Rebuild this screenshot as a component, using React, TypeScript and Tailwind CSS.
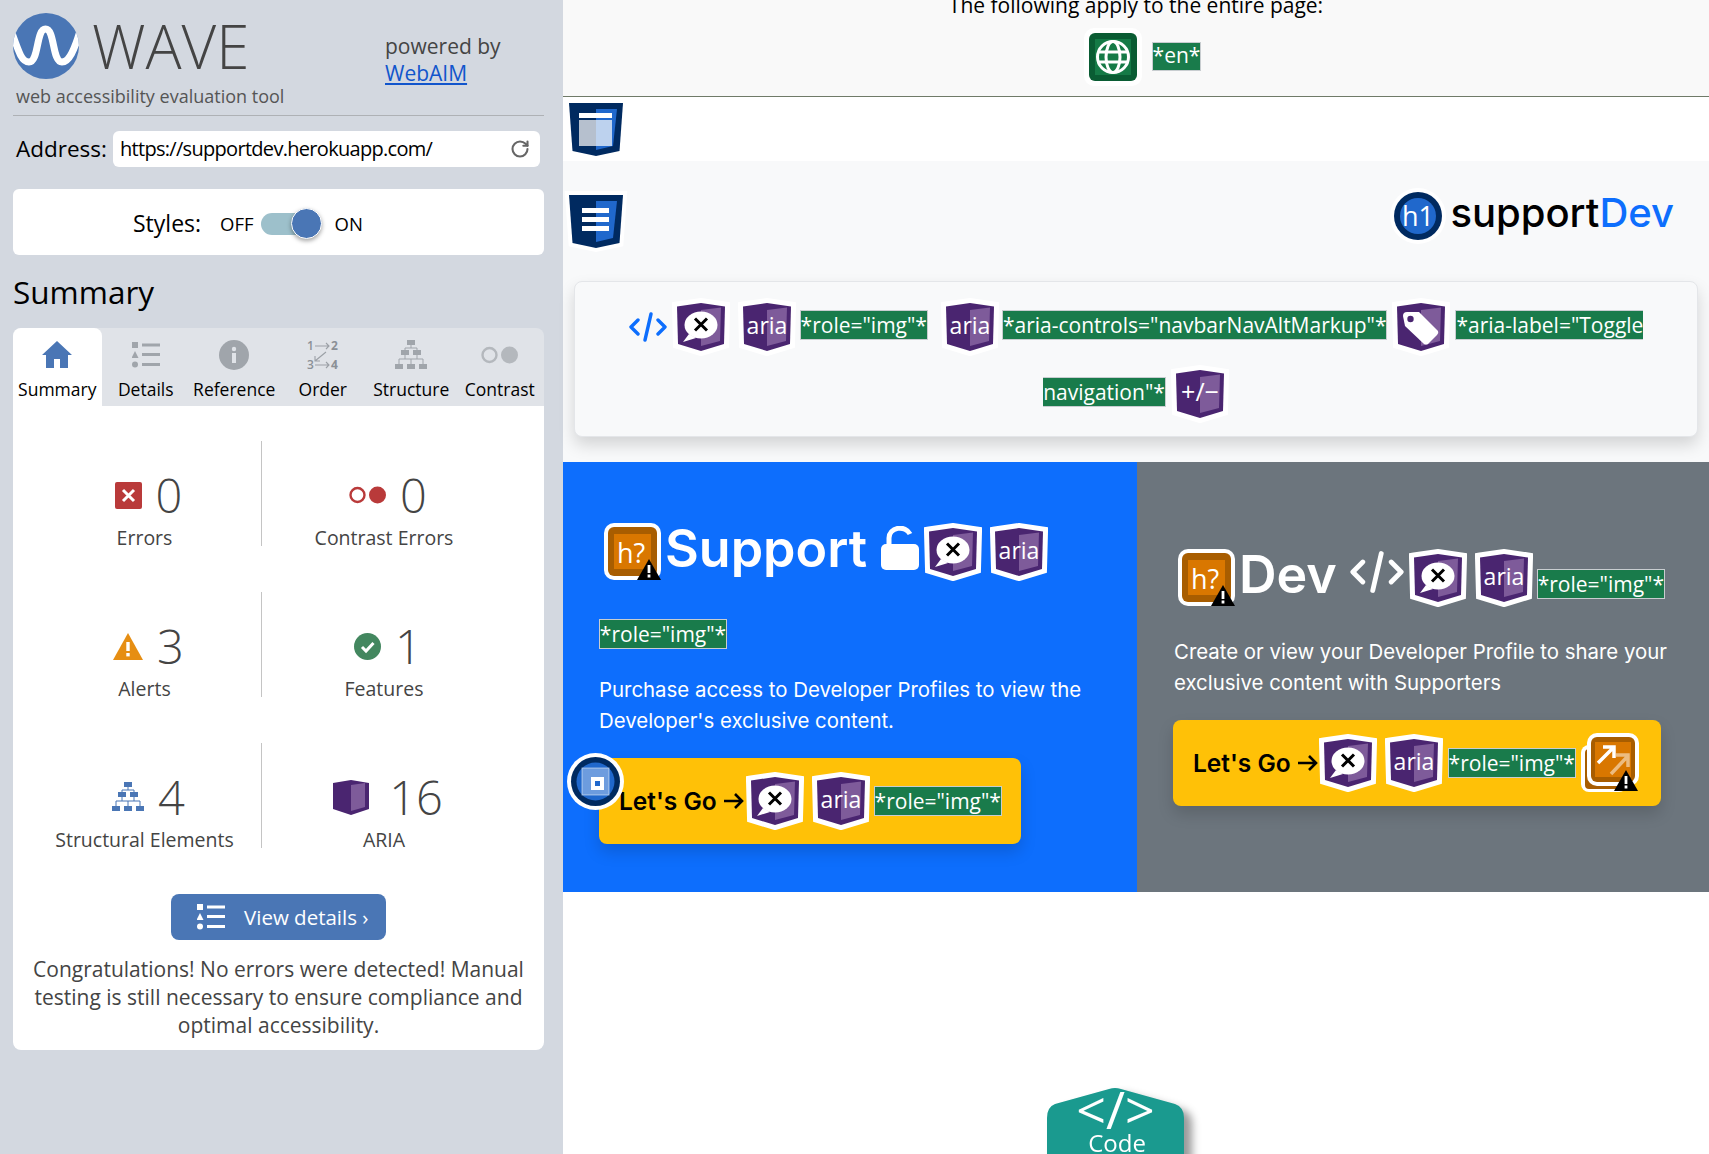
import { RotateCw } from 'lucide-react';
import type { ReactNode } from 'react';

/* WAVE sidebar + the annotated supportDev page */

const OPEN = "'Open Sans', sans-serif";

function Shield({ kind, className = '' }: { kind: 'x' | 'aria' | 'tag' | 'plus'; className?: string }) {
  return (
    <svg width="58" height="58" viewBox="0 0 58 58" className={`inline-block shrink-0 align-middle ${className}`}>
      <path d="M5 8.5 L29 5 L53 8.5 L52 46 L29 53 L6 46 Z" fill="#fff" stroke="#fff" strokeWidth="10" strokeLinejoin="miter" />
      <path d="M5 8.5 L29 5 L53 8.5 L52 46 L29 53 L6 46 Z" fill="#4a2570" />
      <path d="M29 12 L49 9.5 L48 43 L29 48 Z" fill="#7e5b9a" />
      {kind === 'x' && (
        <>
          <ellipse cx="29" cy="27" rx="16.5" ry="13.5" fill="#fff" />
          <path d="M17 36 L11 44 L24 40 Z" fill="#fff" />
          <path d="M23 20.5 L35 32.5 M35 20.5 L23 32.5" stroke="#000" strokeWidth="3" />
        </>
      )}
      {kind === 'aria' && (
        <text x="29" y="36" textAnchor="middle" fill="#fff" fontSize="23" fontFamily={OPEN}>
          aria
        </text>
      )}
      {kind === 'tag' && (
        <>
          <path d="M11 18 Q11 14 15 14 L27 14 L46 33 Q47 35 45 37 L36 46 Q34 47 32 46 L13 28 Z" fill="#fff" />
          <circle cx="18.5" cy="21" r="3.2" fill="#4a2570" />
        </>
      )}
      {kind === 'plus' && (
        <text x="29" y="36" textAnchor="middle" fill="#fff" fontSize="25" fontFamily={OPEN}>
          +/−
        </text>
      )}
    </svg>
  );
}

function BlueShield({ kind }: { kind: 'main' | 'nav' }) {
  return (
    <svg width="64" height="64" viewBox="0 0 64 64" className="block">
      <path d="M5 5 L59 5 L55.5 53 L32 58 L8.5 53 Z" fill="#fff" stroke="#fff" strokeWidth={kind === 'nav' ? 8 : 0} />
      <path d="M5 5 L59 5 L55.5 53 L32 58 L8.5 53 Z" fill="#002a60" />
      <path d="M32 11 L53 11 L49 48 L32 52 Z" fill="#2068cc" />
      {kind === 'main' ? (
        <>
          <rect x="15" y="15" width="33" height="5" fill="#fff" />
          <rect x="15" y="22" width="17" height="26" fill="#b6c0ce" />
          <rect x="32" y="22" width="16" height="26" fill="#bdd2ee" />
        </>
      ) : (
        <>
          <rect x="18" y="18" width="27" height="5" fill="#fff" />
          <rect x="18" y="27" width="27" height="5" fill="#fff" />
          <rect x="18" y="36" width="27" height="5" fill="#fff" />
        </>
      )}
    </svg>
  );
}

function WarnTriangle({ x, y }: { x: number; y: number }) {
  return (
    <g transform={`translate(${x} ${y})`}>
      <path d="M12 0 L24 21 L0 21 Z" fill="#000" />
      <rect x="10.6" y="6" width="2.8" height="8" fill="#fff" />
      <rect x="10.6" y="15.5" width="2.8" height="3" fill="#fff" />
    </g>
  );
}

function HeadingAlert({ className = '' }: { className?: string }) {
  return (
    <svg width="58" height="58" viewBox="0 0 58 58" className={`shrink-0 overflow-visible ${className}`}>
      <rect x="0" y="0" width="57" height="57" rx="10" fill="#fff" />
      <rect x="4" y="4" width="49" height="49" rx="6" fill="#a85d00" />
      <rect x="10" y="11" width="37" height="35" fill="#d97700" />
      <text x="27" y="40" textAnchor="middle" fill="#fff" fontSize="27" fontFamily={OPEN}>
        h?
      </text>
      <WarnTriangle x={33} y={36} />
    </svg>
  );
}

function ExternalAlert() {
  return (
    <svg width="60" height="60" viewBox="0 0 60 60" className="ml-[5px] shrink-0 overflow-visible">
      <rect x="0" y="12" width="46" height="47" rx="8" fill="#fff" />
      <rect x="4" y="16" width="40" height="40" rx="4" fill="#a85d00" />
      <rect x="6" y="0" width="52" height="53" rx="10" fill="#fff" />
      <rect x="10" y="4" width="44" height="45" rx="6" fill="#a85d00" />
      <rect x="14" y="9" width="36" height="35" fill="#d97700" />
      <path d="M17 30 L32 15 M22 14 L33 14 L33 25" stroke="#fff" strokeWidth="3.5" fill="none" />
      <path d="M30 41 L46 24 M35 22 L47 22 L47 34" stroke="#fff" strokeOpacity="0.5" strokeWidth="3.5" fill="none" />
      <WarnTriangle x={33} y={37} />
    </svg>
  );
}

function CodeGlyph({ className = '', width, height }: { className?: string; width: number; height: number }) {
  return (
    <svg width={width} height={height} viewBox="0 0 38 30" fill="none" stroke="currentColor" strokeWidth="3.4" strokeLinecap="round" strokeLinejoin="round" className={`inline-block shrink-0 align-middle ${className}`}>
      <path d="M9 8 L2 15 L9 22" />
      <path d="M29 8 L36 15 L29 22" />
      <path d="M22 2 L16 28" />
    </svg>
  );
}

function LockOpen() {
  return (
    <svg width="38" height="44" viewBox="0 0 38 44" className="-mt-[8px] ml-[14px] shrink-0">
      <path d="M8 21 V12 A11 10 0 0 1 29 8" fill="none" stroke="#fff" strokeWidth="5" />
      <rect x="0" y="18" width="38" height="26" rx="5" fill="#fff" />
    </svg>
  );
}

function RoleBox({ children, className = '' }: { children: ReactNode; className?: string }) {
  return (
    <span className={`border border-[#c8cdd0] bg-[#197b4b] text-white ${className}`} style={{ fontFamily: OPEN }}>
      {children}
    </span>
  );
}

function BlockRole({ className = '' }: { className?: string }) {
  return (
    <RoleBox className={`flex h-[30px] w-[128px] shrink-0 items-center justify-center text-[21px] leading-[28px] ${className}`}>
      *role="img"*
    </RoleBox>
  );
}

function Arrow() {
  return (
    <svg width="20" height="18" viewBox="0 0 20 18" fill="none" stroke="#000" strokeWidth="2.6" className="ml-[7px] shrink-0">
      <path d="M0 9 H18 M11 2 L18 9 L11 16" />
    </svg>
  );
}

function HomeIcon() {
  return (
    <svg width="30" height="27" viewBox="0 0 30 27">
      <path d="M15 0 L30 14 L26 14 L26 27 L18 27 L18 18 L12 18 L12 27 L4 27 L4 14 L0 14 Z" fill="#4a76b5" />
    </svg>
  );
}

function DetailsIcon({ color = '#a0a5ab' }: { color?: string }) {
  return (
    <svg width="28" height="26" viewBox="0 0 28 26" fill={color}>
      <rect x="0" y="0" width="6" height="6" />
      <path d="M3 9 L6.5 16 L-0.5 16 Z" />
      <circle cx="3" cy="22.5" r="3" />
      <rect x="10" y="1.5" width="18" height="3" />
      <rect x="10" y="11" width="18" height="3" />
      <rect x="10" y="21" width="18" height="3" />
    </svg>
  );
}

function InfoIcon() {
  return (
    <svg width="30" height="30" viewBox="0 0 30 30">
      <circle cx="15" cy="15" r="15" fill="#a0a5ab" />
      <rect x="13" y="13" width="4" height="10" fill="#e0e3e8" />
      <circle cx="15" cy="9" r="2.2" fill="#e0e3e8" />
    </svg>
  );
}

function OrderIcon() {
  return (
    <svg width="32" height="30" viewBox="0 0 32 30" fill="none" stroke="#9ba0a6" strokeWidth="1.1">
      <text x="0" y="10" fontSize="12" fontWeight="600" fill="#8b9096" stroke="none" fontFamily={OPEN}>1</text>
      <text x="24" y="10" fontSize="12" fontWeight="700" fill="#8b9096" stroke="none" fontFamily={OPEN}>2</text>
      <text x="0" y="29" fontSize="12" fontWeight="600" fill="#8b9096" stroke="none" fontFamily={OPEN}>3</text>
      <text x="24" y="29" fontSize="12" fontWeight="700" fill="#8b9096" stroke="none" fontFamily={OPEN}>4</text>
      <path d="M8 6 H22 M19 3 L22 6 L19 9 M8 25 H22 M19 22 L22 25 L19 28 M19 12 L8 21 M8 16 V21 H13" />
    </svg>
  );
}

function TreeIcon({ color }: { color: string }) {
  return (
    <svg width="32" height="30" viewBox="0 0 32 30" fill={color}>
      <rect x="12" y="0" width="8" height="5" />
      <rect x="6" y="10" width="8" height="5" />
      <rect x="18" y="10" width="8" height="5" />
      <rect x="0" y="24" width="8" height="5" />
      <rect x="12" y="24" width="8" height="5" />
      <rect x="24" y="24" width="8" height="5" />
      <path d="M16 5 V8 M10 10 V8 H22 V10 M10 15 V19 M22 15 V19 M4 24 V19 H28 V24 M16 19 V24" stroke={color} fill="none" strokeWidth="1" />
    </svg>
  );
}

function DotsIcon({ color, width = 37 }: { color: string; width?: number }) {
  return (
    <svg width={width} height="18" viewBox="0 0 37 18">
      <circle cx="8.5" cy="9" r="7" fill="none" stroke={color} strokeWidth="2.4" />
      <circle cx="28.5" cy="9" r="8.5" fill={color} />
    </svg>
  );
}

const tabs = [
  { label: 'Summary', icon: <HomeIcon /> },
  { label: 'Details', icon: <DetailsIcon /> },
  { label: 'Reference', icon: <InfoIcon /> },
  { label: 'Order', icon: <OrderIcon /> },
  { label: 'Structure', icon: <TreeIcon color="#a0a5ab" /> },
  { label: 'Contrast', icon: <DotsIcon color="#b4b8bd" /> },
];

function Stat({ icon, value, label, divider, gap = 'gap-[14px]' }: { icon: ReactNode; value: string; label: string; divider?: boolean; gap?: string }) {
  return (
    <div className={`flex h-[105px] flex-col items-center pt-[32px] ${divider ? 'w-[234px] border-r border-[#c4c4c4]' : 'w-[244px]'}`}>
      <div className={`flex h-[44px] items-center pl-[8px] ${gap}`}>
        {icon}
        <span className="text-[47px] font-light leading-[44px] text-[#444]">{value}</span>
      </div>
      <div className="mt-[13px] whitespace-nowrap text-[19.5px] leading-[16px] text-[#444]">{label}</div>
    </div>
  );
}

function Sidebar() {
  return (
    <aside className="flex h-full w-[563px] shrink-0 flex-col bg-[#d3d8e0] pl-[13px] pr-[19px] font-['Open_Sans',sans-serif]">
      <header className="flex h-[116px] border-b border-[#aeb1b5] pt-[13px]">
        <div className="w-[372px]">
          <div className="flex items-center gap-[13px]">
            <svg width="66" height="66" viewBox="0 0 66 66" className="shrink-0">
              <defs>
                <clipPath id="logo-clip">
                  <circle cx="33" cy="33" r="33" />
                </clipPath>
              </defs>
              <circle cx="33" cy="33" r="33" fill="#4a76b5" />
              <path d="M-1 20 C 6 40, 9 49, 16 49 C 26 49, 23 16, 32.5 16 C 42 16, 39 49, 49 49 C 56 49, 61 38, 67 18" fill="none" stroke="#fff" strokeWidth="7" clipPath="url(#logo-clip)" />
            </svg>
            <span className="text-[60px] font-light leading-[66px] text-[#444]">WAVE</span>
          </div>
          <div className="mt-[4px] pl-[3px] text-[18px] leading-[26px] text-[#555]">web accessibility evaluation tool</div>
        </div>
        <div className="pt-[20px] text-[21px] leading-[27px] text-[#444]">
          <div>powered by</div>
          <div className="text-[#1155cc] underline">WebAIM</div>
        </div>
      </header>

      <div className="mt-[15px] flex items-center pl-[3px]">
        <span className="w-[91px] text-[22.5px] text-black">Address:</span>
        <div className="ml-[6px] flex h-[36px] w-[427px] items-center justify-between rounded-md bg-white pl-[7px] pr-[10px]">
          <span className="text-[20px] tracking-[-0.7px] text-black">https://supportdev.herokuapp.com/</span>
          <RotateCw size={20} strokeWidth={2.5} className="text-[#666]" />
        </div>
      </div>

      <div className="mt-[22px] flex h-[66px] items-center rounded-md bg-white pl-[120px] pt-[3px]">
        <span className="text-[23px] text-black">Styles:</span>
        <span className="ml-[19px] text-[18.5px] text-black">OFF</span>
        <span className="relative ml-[7px] flex h-[22px] w-[48px] items-center rounded-full bg-[#9dc0cb]">
          <span className="absolute right-[-13px] size-[31px] rounded-full border border-white bg-[#4a76b5] shadow-[0_2px_4px_rgba(0,0,0,0.35)]" />
        </span>
        <span className="ml-[26px] text-[18.5px] text-black">ON</span>
      </div>

      <h2 className="mt-[18px] text-[31.5px] leading-[38px] text-black">Summary</h2>

      <div className="mt-[17px] grid h-[78px] grid-cols-6 rounded-t-lg bg-[#e0e3e8]">
        {tabs.map((t, i) => (
          <div key={t.label} className={`flex flex-col items-center ${i === 0 ? 'rounded-t-lg bg-white' : ''}`}>
            <div className="flex h-[49px] items-center pt-[4px]">{t.icon}</div>
            <span className="whitespace-nowrap text-[17.5px] leading-[24px] text-black">{t.label}</span>
          </div>
        ))}
      </div>

      <div className="flex h-[644px] flex-col rounded-b-lg bg-white pt-[35px]">
        <div className="ml-[15px] flex flex-col gap-[46px]">
          <div className="flex">
            <Stat
              divider
              value="0"
              label="Errors"
              icon={
                <svg width="27" height="27" viewBox="0 0 27 27">
                  <rect width="27" height="27" rx="2" fill="#b93a3a" />
                  <path d="M8 8 L19 19 M19 8 L8 19" stroke="#fff" strokeWidth="3" />
                </svg>
              }
            />
            <Stat value="0" label="Contrast Errors" icon={<DotsIcon color="#b93a3a" />} />
          </div>
          <div className="flex">
            <Stat
              divider
              value="3"
              label="Alerts"
              icon={
                <svg width="30" height="27" viewBox="0 0 30 27">
                  <path d="M15 0 L30 27 L0 27 Z" fill="#e68e13" />
                  <rect x="13.3" y="9" width="3.4" height="9" fill="#fff" />
                  <rect x="13.3" y="20" width="3.4" height="3.4" fill="#fff" />
                </svg>
              }
            />
            <Stat
              value="1"
              label="Features"
              icon={
                <svg width="27" height="27" viewBox="0 0 27 27">
                  <circle cx="13.5" cy="13.5" r="13.5" fill="#43875f" />
                  <path d="M8 14 L12 18 L19.5 10" stroke="#fff" strokeWidth="3" fill="none" />
                </svg>
              }
            />
          </div>
          <div className="flex">
            <Stat divider value="4" label="Structural Elements" icon={<TreeIcon color="#4a76b5" />} />
            <Stat
              value="16"
              label="ARIA"
              gap="gap-[20px]"
              icon={
                <svg width="36" height="35" viewBox="0 0 36 35">
                  <path d="M0 3 L18 0 L36 3 L36 29 L18 35 L0 29 Z" fill="#4a2570" />
                  <path d="M18 5 L32 3 L32 27 L18 31 Z" fill="#7e5b9a" />
                </svg>
              }
            />
          </div>
        </div>

        <div className="mt-[46px] flex h-[46px] w-[215px] items-center self-center rounded-lg bg-[#4a76b5] pl-[26px] text-white">
          <DetailsIcon color="#fff" />
          <span className="ml-[19px] whitespace-nowrap text-[20.5px]">View details ›</span>
        </div>

        <p className="mt-[15px] px-[13px] text-center text-[21px] leading-[28.2px] text-[#444]">
          Congratulations! No errors were detected! Manual testing is still necessary to ensure compliance and optimal accessibility.
        </p>
      </div>
    </aside>
  );
}

function Navbar() {
  return (
    <div className="h-[301px] shrink-0 bg-[#f8f9fa] pt-[29px]">
      <div className="flex h-[91px] items-start justify-between pl-[1px] pr-[35px]">
        <BlueShield kind="nav" />
        <div className="-mt-[2px] flex items-center gap-[4px]">
          <svg width="56" height="56" viewBox="0 0 56 56">
            <circle cx="28" cy="28" r="28" fill="#fff" />
            <circle cx="28" cy="28" r="24" fill="#002a60" />
            <circle cx="28" cy="28" r="18" fill="#2068cc" />
            <text x="28" y="38" textAnchor="middle" fill="#fff" fontSize="27" fontFamily={OPEN}>
              h1
            </text>
          </svg>
          <span className="-mt-[6px] text-[40px] font-medium leading-[50px] text-black">
            support<span className="text-[#0d6efd]">Dev</span>
          </span>
        </div>
      </div>

      <div className="mx-[11px] h-[156px] rounded-lg border border-[#e4e6e9] bg-[#f8f9fa] px-[20px] pt-[10px] text-center text-[21px] leading-[66px] shadow-[0_8px_16px_rgba(0,0,0,0.15)]">
        <CodeGlyph width={38} height={30} className="mr-[5px] text-[#0d6efd]" />
        <Shield kind="x" className="mr-[8px]" />
        <Shield kind="aria" className="mr-[4px]" />
        <RoleBox>*role="img"*</RoleBox>
        <Shield kind="aria" className="ml-[13px] mr-[3px]" />
        <RoleBox>*aria-controls="navbarNavAltMarkup"*</RoleBox>
        <Shield kind="tag" className="mx-[5px]" />
        <RoleBox>*aria-label="Toggle navigation"*</RoleBox>
        <Shield kind="plus" className="ml-[5px]" />
      </div>
    </div>
  );
}

function Main() {
  return (
    <div className="flex h-[430px] shrink-0 text-white">
      <section className="relative w-[574px] bg-[#0d6efd] pl-[36px] pt-[61px]">
        <div className="flex h-[57px] items-center">
          <HeadingAlert className="ml-[5px]" />
          <span className="-mt-[6px] ml-[3px] text-[52px] font-semibold leading-[57px]">Support</span>
          <LockOpen />
          <Shield kind="x" className="ml-[5px]" />
          <Shield kind="aria" className="ml-[8px]" />
        </div>
        <BlockRole className="mt-[39px]" />
        <p className="mt-[25px] w-[500px] text-[20.4px] leading-[31px]">
          Purchase access to Developer Profiles to view the Developer's exclusive content.
        </p>
        <div className="mt-[22px] flex h-[86px] w-[422px] items-center rounded-lg bg-[#ffc107] pl-[20px] shadow-[0_8px_16px_rgba(0,0,0,0.15)]">
          <span className="text-[24.5px] font-semibold text-black">Let's Go</span>
          <Arrow />
          <Shield kind="x" className="ml-[2px]" />
          <Shield kind="aria" className="ml-[8px]" />
          <BlockRole className="ml-[4px]" />
        </div>
        <svg width="57" height="57" viewBox="0 0 57 57" className="absolute left-[4px] top-[291px]">
          <circle cx="28.5" cy="28.5" r="28.5" fill="#fff" />
          <circle cx="28.5" cy="28.5" r="24.5" fill="#002a60" />
          <circle cx="28.5" cy="28.5" r="19" fill="#2068cc" />
          <rect x="15" y="15" width="27" height="27" fill="#fff" fillOpacity="0.35" stroke="#fff" strokeOpacity="0.5" />
          <rect x="24" y="24" width="13" height="13" fill="#fff" />
          <rect x="28" y="28" width="5" height="5" fill="#2068cc" />
        </svg>
      </section>

      <section className="w-[572px] bg-[#6c757d] pl-[37px] pt-[87px]">
        <div className="flex h-[57px] items-start">
          <HeadingAlert className="ml-[4px]" />
          <span className="ml-[3px] mt-[1px] text-[52px] font-semibold leading-[50px]">Dev</span>
          <CodeGlyph width={54} height={44} className="ml-[13px] mt-[1px] text-white" />
          <Shield kind="x" className="ml-[5px]" />
          <Shield kind="aria" className="ml-[8px]" />
          <BlockRole className="ml-[4px] mt-[20px]" />
        </div>
        <p className="mt-[30px] w-[500px] text-[20.4px] leading-[31px]">
          Create or view your Developer Profile to share your exclusive content with Supporters
        </p>
        <div className="-ml-[1px] mt-[22px] flex h-[86px] w-[488px] items-center rounded-lg bg-[#ffc107] pl-[20px] shadow-[0_8px_16px_rgba(0,0,0,0.15)]">
          <span className="text-[24.5px] font-semibold text-black">Let's Go</span>
          <Arrow />
          <Shield kind="x" className="ml-[1px]" />
          <Shield kind="aria" className="ml-[8px]" />
          <BlockRole className="ml-[5px]" />
          <ExternalAlert />
        </div>
      </section>
    </div>
  );
}

export default function App() {
  return (
    <div className="flex h-[1154px] w-[1709px] overflow-hidden bg-white font-['Inter',sans-serif]">
      <Sidebar />
      <div className="flex w-[1146px] flex-col">
        <div className="h-[97px] shrink-0 border-b border-[#6f7a68] bg-[#f9f9f9] text-black">
          <p className="-mt-[9px] text-center text-[21px] leading-[28px]" style={{ fontFamily: OPEN }}>
            The following apply to the entire page:
          </p>
          <div className="mt-[9px] flex items-center justify-center gap-[10px] pl-[13px]">
            <svg width="58" height="58" viewBox="0 0 58 58">
              <rect width="58" height="58" rx="10" fill="#fff" />
              <rect x="5" y="5" width="48" height="48" rx="6" fill="#0a5c33" />
              <rect x="11" y="11" width="36" height="36" fill="#157a46" />
              <g fill="none" stroke="#fff" strokeWidth="3">
                <circle cx="29" cy="29" r="15.5" />
                <ellipse cx="29" cy="29" rx="7" ry="15.5" />
                <path d="M14 24 H44 M14 34 H44" />
              </g>
            </svg>
            <RoleBox className="-mt-[2px] flex h-[29px] items-center text-[21px]">*en*</RoleBox>
          </div>
        </div>

        <div className="h-[64px] shrink-0 bg-white pl-[1px] pt-[1px]">
          <BlueShield kind="main" />
        </div>

        <Navbar />
        <Main />

        <div className="min-h-0 flex-1 bg-white pl-[484px] pt-[196px]">
          <svg width="150" height="80" viewBox="0 0 150 80" className="overflow-visible drop-shadow-[8px_6px_4px_rgba(0,0,0,0.4)]">
            <path d="M8 16 L62 1 Q68 -1 74 1 L128 16 Q137 19 137 30 L137 80 L0 80 L0 30 Q0 19 8 16 Z" fill="#1a9a8f" />
            <text x="68.5" y="41" textAnchor="middle" fill="#fff" fontSize="52" fontFamily={OPEN}>
              &lt;/&gt;
            </text>
            <text x="70" y="64" textAnchor="middle" fill="#fff" fontSize="24" fontFamily={OPEN}>
              Code
            </text>
          </svg>
        </div>
      </div>
    </div>
  );
}
